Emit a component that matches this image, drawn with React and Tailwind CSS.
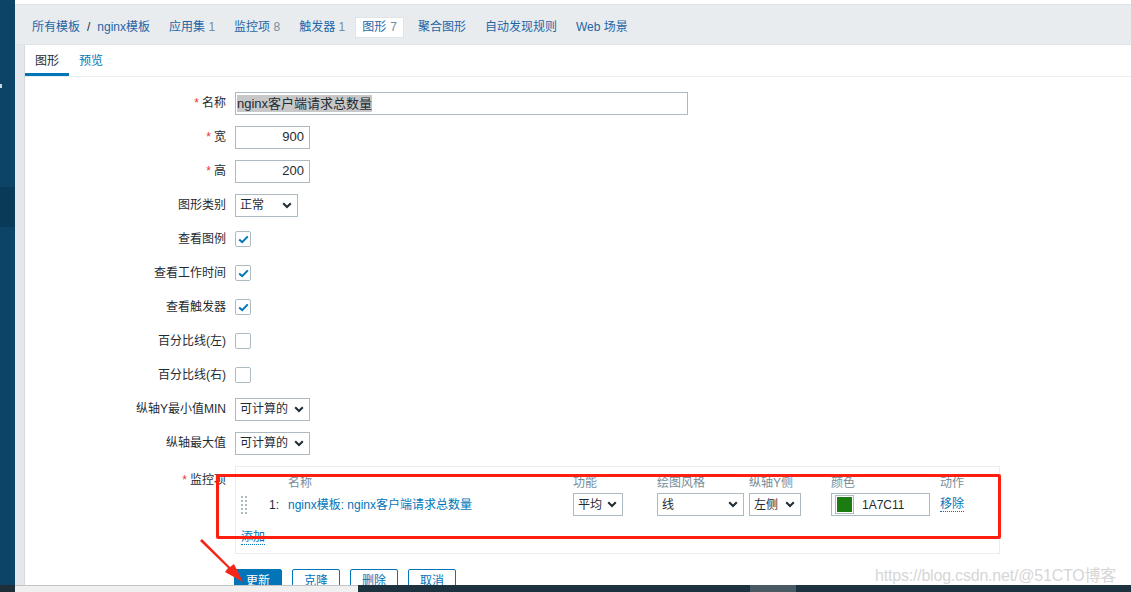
import React from "react";

const Chevron = () => (
  <svg width="10" height="7" viewBox="0 0 10 7" className="shrink-0">
    <path d="M1.2 1.2 L5 5 L8.8 1.2" fill="none" stroke="#1f2c33" strokeWidth="2" />
  </svg>
);

const Select = ({ value, w }) => (
  <div
    className={`flex items-center justify-between h-[23px] border border-[#acbbc2] bg-white pl-[4px] pr-[5px] text-[12px] text-[#1f2c33] ${w}`}
  >
    <span>{value}</span>
    <Chevron />
  </div>
);

const Check = ({ on }) => (
  <div className="flex items-center justify-center w-[16px] h-[16px] border border-[#acbbc2] rounded-[2px] bg-white">
    {on && (
      <svg width="11" height="9" viewBox="0 0 11 9">
        <path d="M1.2 4.4 L4.2 7.2 L9.8 1.4" fill="none" stroke="#0275b8" strokeWidth="2" />
      </svg>
    )}
  </div>
);

const Row = ({ label, req, children }) => (
  <div className="flex items-center h-[34px] shrink-0">
    <div className="w-[210px] shrink-0 pr-[9px] text-right text-[12px] text-[#1f2c33]">
      {req && <span className="text-[#e33734] mr-[3px]">*</span>}
      {label}
    </div>
    <div className="flex items-center">{children}</div>
  </div>
);

const crumbs = [
  ["应用集", "1"],
  ["监控项", "8"],
  ["触发器", "1"],
];

export default function App() {
  return (
    <div
      className="relative w-[1131px] h-[592px] overflow-hidden flex flex-col bg-white"
      style={{ fontFamily: '"Liberation Sans", "Noto Sans CJK SC", sans-serif' }}
    >
      <div className="flex flex-1 min-h-0">
        {/* sidebar */}
        <div className="relative w-[15px] shrink-0 bg-[#0b4466] flex flex-col">
          <div className="h-[187px]" />
          <div className="h-[40px] bg-[#093a58]" />
          <div className="absolute left-0 top-[84px] w-[2px] h-[4px] bg-[#c9d6df]" />
        </div>

        <div className="flex-1 flex flex-col min-w-0">
          <div className="h-[5px] shrink-0 bg-white border-b border-[#dfe4e7]" />
          {/* breadcrumb bar */}
          <div className="h-[40px] shrink-0 bg-[#e8ecef] border-b border-[#dfe4e7] flex items-center pt-[5px] pl-[17px] text-[12px] text-[#1f65a6]">
            <span>所有模板</span>
            <span className="mx-[7px] text-[#1f2c33]">/</span>
            <span>nginx模板</span>
            {crumbs.map(([t, n]) => (
              <span key={t} className="ml-[19px]">
                {t} <span className="text-[#768d99]">{n}</span>
              </span>
            ))}
            <span className="ml-[10px] h-[21px] px-[6px] flex items-center bg-white border border-[#dfe4e7]">
              图形 <span className="ml-[4px] text-[#768d99]">7</span>
            </span>
            <span className="ml-[14px]">聚合图形</span>
            <span className="ml-[19px]">自动发现规则</span>
            <span className="ml-[19px]">Web 场景</span>
          </div>

          <div className="flex flex-1 min-h-0 bg-[#e4e8ec]">
            <div className="w-[10px] shrink-0 border-r border-[#d5dbe0]" />
            {/* content panel */}
            <div className="flex-1 bg-white flex flex-col overflow-hidden">
              <div className="h-[32px] shrink-0 flex items-end border-b border-[#ebeef0] text-[12px]">
                <div className="w-[44px] h-full flex flex-col justify-between">
                  <span className="pl-[10px] pt-[7px] text-[#1f2c33]">图形</span>
                  <div className="h-[3px] bg-[#0275b8]" />
                </div>
                <span className="self-start pl-[10px] pt-[7px] text-[#0275b8]">预览</span>
              </div>

              <div className="pt-[9px] flex flex-col shrink-0">
                <Row label="名称" req>
                  <div className="w-[453px] h-[23px] border border-[#acbbc2] flex items-center px-[1px] text-[13px] text-[#1f2c33]">
                    <span className="bg-[#c8c8c8] leading-[17px]">nginx客户端请求总数量</span>
                  </div>
                </Row>
                <Row label="宽" req>
                  <div className="w-[75px] h-[23px] border border-[#acbbc2] flex items-center justify-end pr-[5px] text-[13px] text-[#1f2c33]">900</div>
                </Row>
                <Row label="高" req>
                  <div className="w-[75px] h-[23px] border border-[#acbbc2] flex items-center justify-end pr-[5px] text-[13px] text-[#1f2c33]">200</div>
                </Row>
                <Row label="图形类别">
                  <Select value="正常" w="w-[63px]" />
                </Row>
                <Row label="查看图例">
                  <Check on />
                </Row>
                <Row label="查看工作时间">
                  <Check on />
                </Row>
                <Row label="查看触发器">
                  <Check on />
                </Row>
                <Row label="百分比线(左)">
                  <Check />
                </Row>
                <Row label="百分比线(右)">
                  <Check />
                </Row>
                <Row label="纵轴Y最小值MIN">
                  <Select value="可计算的" w="w-[75px]" />
                </Row>
                <Row label="纵轴最大值">
                  <Select value="可计算的" w="w-[75px]" />
                </Row>

                {/* items */}
                <div className="flex mt-[6px]">
                  <div className="w-[210px] shrink-0 pr-[9px] pt-[5px] text-right text-[12px] text-[#1f2c33]">
                    <span className="text-[#e33734] mr-[3px]">*</span>监控项
                  </div>
                  <div className="w-[765px] h-[88px] border border-[#ebeef0] pl-[5px] pt-[7px] text-[12px]">
                    <div className="grid grid-cols-[28px_19px_285px_84px_92px_82px_109px_1fr] text-[#768d99] h-[14px] items-center">
                      <span />
                      <span />
                      <span>名称</span>
                      <span>功能</span>
                      <span>绘图风格</span>
                      <span>纵轴Y侧</span>
                      <span>颜色</span>
                      <span>动作</span>
                    </div>
                    <div className="grid grid-cols-[28px_19px_285px_84px_92px_82px_109px_1fr] items-center h-[33px]">
                      <div className="grid grid-cols-2 gap-x-[2px] gap-y-[2px] w-[6px]">
                        {Array.from({ length: 10 }).map((_, i) => (
                          <div key={i} className="w-[2px] h-[2px] bg-[#acbbc2]" />
                        ))}
                      </div>
                      <span className="text-[#1f2c33]">1:</span>
                      <span className="text-[#0275b8]">nginx模板: nginx客户端请求总数量</span>
                      <Select value="平均" w="w-[50px]" />
                      <Select value="线" w="w-[87px]" />
                      <Select value="左侧" w="w-[52px]" />
                      <div className="w-[99px] h-[23px] border border-[#acbbc2] flex items-center pl-[3px] text-[#1f2c33]">
                        <div className="w-[19px] h-[19px] border border-[#acbbc2] p-[1px]">
                          <div className="w-full h-full bg-[#1a7c11]" />
                        </div>
                        <span className="ml-[8px]">1A7C11</span>
                      </div>
                      <span className="text-[#0275b8] border-b border-dotted border-[#0275b8] w-fit leading-[14px]">移除</span>
                    </div>
                    <span className="inline-block mt-[9px] text-[#0275b8] border-b border-dotted border-[#0275b8] leading-[14px]">添加</span>
                  </div>
                </div>

                {/* buttons */}
                <div className="flex gap-[10px] mt-[15px] pl-[209px] text-[12px]">
                  <div className="w-[48px] h-[23px] bg-[#0275b8] border border-[#0275b8] rounded-[2px] text-white flex items-center justify-center">更新</div>
                  <div className="w-[48px] h-[23px] bg-white border border-[#0275b8] rounded-[2px] text-[#0275b8] flex items-center justify-center">克隆</div>
                  <div className="w-[48px] h-[23px] bg-white border border-[#0275b8] rounded-[2px] text-[#0275b8] flex items-center justify-center">删除</div>
                  <div className="w-[48px] h-[23px] bg-white border border-[#0275b8] rounded-[2px] text-[#0275b8] flex items-center justify-center">取消</div>
                </div>
              </div>
            </div>
          </div>
        </div>
      </div>

      {/* bottom bar */}
      <div className="h-[7px] shrink-0 flex">
        <div className="w-[15px] bg-[#1f2f3a]" />
        <div className="w-[343px] bg-[#f0f0f0] border-t border-[#c4c4c4]" />
        <div className="flex-1 bg-[#1d323f] flex">
          <div className="w-[392px]" />
          <div className="w-[46px] bg-[#4a5a64]" />
        </div>
      </div>

      {/* annotation overlays */}
      <div className="absolute left-[216px] top-[474px] w-[785px] h-[65px] border-[3px] border-[#ff1f10] rounded-[2px] pointer-events-none" />
      <svg className="absolute left-[195px] top-[535px] pointer-events-none" width="55" height="55" viewBox="0 0 55 55">
        <polygon points="5,6 33,33 30,37 48,47 39,29 35,32 7,4" fill="#f4261a" />
      </svg>
      <div className="absolute left-[875px] top-[564px] text-[16px] text-[#d6d6d6] tracking-[-0.2px]">
        https://blog.csdn.net/@51CTO博客
      </div>
    </div>
  );
}
